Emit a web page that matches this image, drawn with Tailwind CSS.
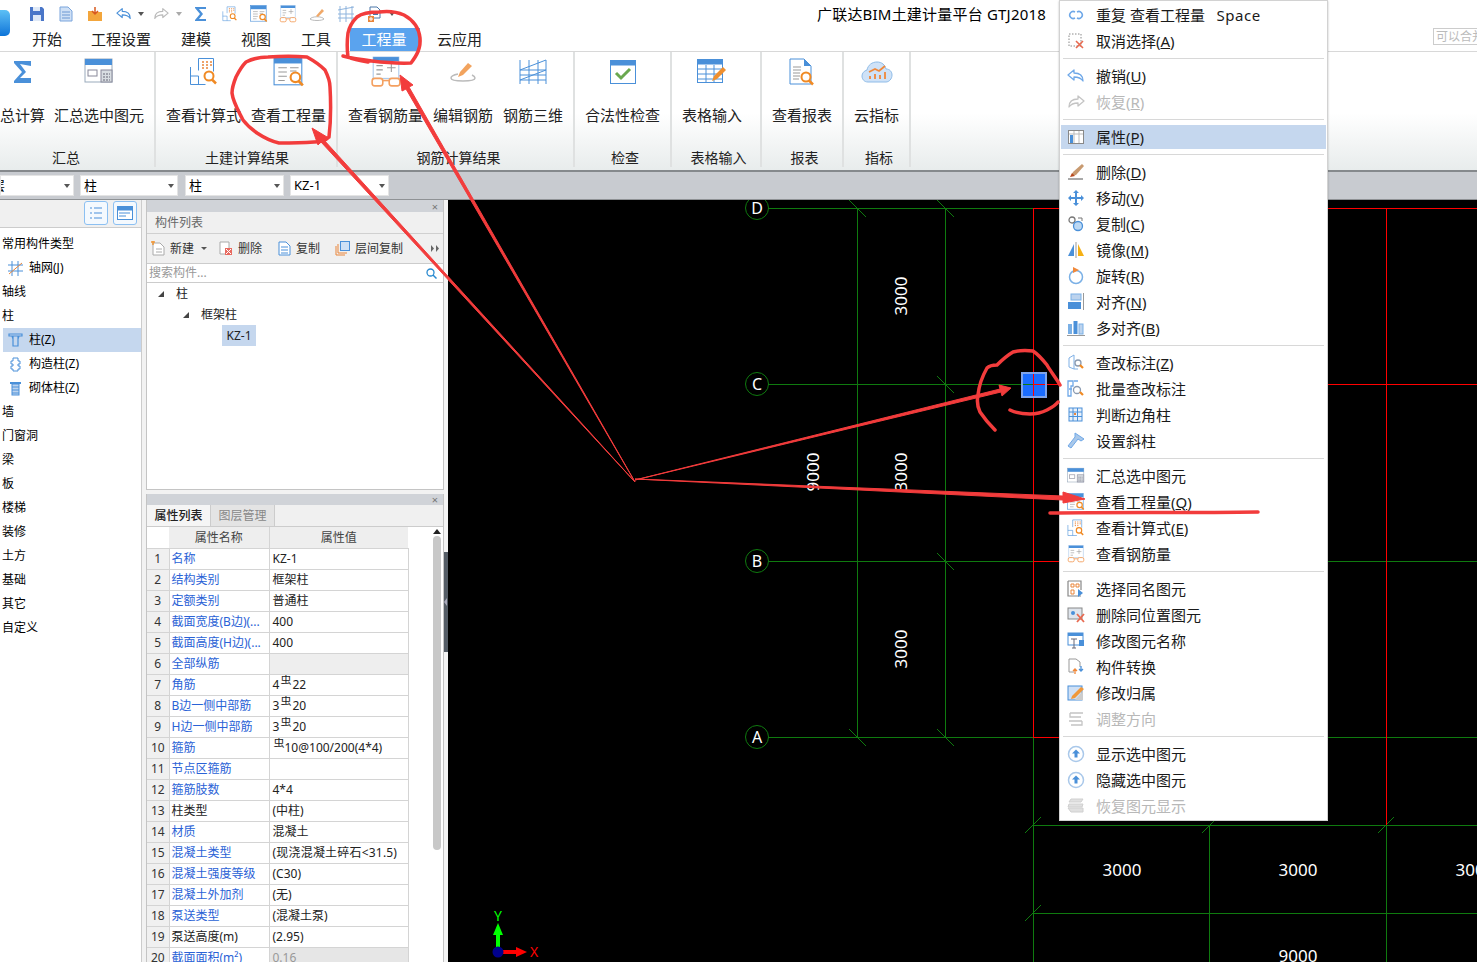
<!DOCTYPE html>
<html lang="zh">
<head>
<meta charset="utf-8">
<title>广联达BIM土建计量平台 GTJ2018</title>
<script src="https://cdn.jsdelivr.net/npm/@tailwindcss/browser@4"></script>
</head>
<body class="m-0">
<svg class="absolute w-0 h-0" aria-hidden="true">
  <defs>
    <symbol id="i-view" viewBox="0 0 30 30"><rect x="1" y="1" width="26" height="26" fill="#fff" stroke="#4a90d9"/><rect x="1" y="1" width="26" height="6" fill="#4a90d9"/><path d="M5 11h8M5 15h8M5 19h8M5 23h6M16 11h8M16 14h6" stroke="#999" fill="none"/><circle cx="21" cy="20" r="4.5" fill="#fff" stroke="#f08a24" stroke-width="2"/><path d="M24 23.5l4 4" stroke="#f08a24" stroke-width="2.5"/></symbol>
    <symbol id="i-calc" viewBox="0 0 30 30"><path d="M1.500 10v17.500h15M1.500 19h8v8.500M9.500 1.500h15v13M9.500 1.500v12" fill="none" stroke="#4a90d9"/><path d="M13 5h2M17 5h2M21 5h2M13 8h2M17 8h2M21 8h2M13 11h2M17 11h2" stroke="#e9853a" stroke-width="1.500"/><circle cx="20" cy="19" r="4.500" fill="#fff" stroke="#f08a24" stroke-width="2"/><path d="M23 22.500l4 4" stroke="#f08a24" stroke-width="2.500"/></symbol>
    <symbol id="i-steel" viewBox="0 0 30 30"><rect x="3" y="1" width="24" height="20" fill="#fff" stroke="#a9c8ea"/><rect x="3" y="1" width="24" height="4" fill="#4a90d9"/><path d="M6 9h6M6 13h6M6 17h4M16 11h8M20 7v8" stroke="#999" fill="none"/><rect x="2" y="21" width="10" height="7" rx="2.500" fill="#fff" stroke="#f4a060" stroke-width="1.500"/><rect x="18" y="21" width="10" height="7" rx="2.500" fill="#fff" stroke="#f4a060" stroke-width="1.500"/><path d="M12 23h6" stroke="#f4a060" stroke-width="1.500"/></symbol>
    <symbol id="i-sum" viewBox="0 0 30 30"><rect x="1" y="2" width="27" height="23" fill="#fff" stroke="#9ab"/><rect x="1" y="2" width="27" height="6" fill="#4a90d9"/><rect x="4" y="13" width="9" height="6" fill="#fff" stroke="#889"/><rect x="17" y="13" width="11" height="12" fill="#d8dde2" stroke="#889"/><path d="M19 17h7M19 20h7M19 23h7" stroke="#667" stroke-dasharray="2 1"/></symbol>
    <symbol id="i-up" viewBox="0 0 18 18"><circle cx="9" cy="9" r="7.500" fill="#fff" stroke="#a9c8ea" stroke-width="1.500"/><path d="M9 4.500l4 4h-2.500v4h-3v-4H5z" fill="#4a90d9"/></symbol>
    <symbol id="i-undo" viewBox="0 0 18 18"><path d="M1 8l6-5v3c5 0 9 2 9 8-2-3-5-4-9-4v3z" fill="#fff" stroke="currentColor" stroke-width="1.300" stroke-linejoin="round"/></symbol>
    <symbol id="i-redo" viewBox="0 0 18 18"><path d="M17 8l-6-5v3c-5 0-9 2-9 8 2-3 5-4 9-4v3z" fill="#fff" stroke="currentColor" stroke-width="1.300" stroke-linejoin="round"/></symbol>
    <symbol id="i-check" viewBox="0 0 18 18"><path d="M2 4l5-3v14l-5-2zM7 15h4" fill="none" stroke="#7fb0e6"/><circle cx="11" cy="9" r="3" fill="#fff" stroke="#8a9ab0" stroke-width="1.300"/><path d="M13 11l3 3" stroke="#f08a24" stroke-width="2.200"/></symbol>
  </defs>
</svg>

<div class="relative w-[1477px] h-[962px] overflow-hidden bg-white text-[12px] text-black font-['Noto_Sans','Noto_Sans_CJK_SC',sans-serif]">

  <!-- header -->
  <header class="flex h-[52px] border-b border-[#d8d8d8] bg-white">
    <div class="w-[10px] pt-[10px]"><div class="h-[26px] w-[10px] rounded-r-[5px] bg-linear-to-b from-[#5cc0f5] to-[#0a74d8]"></div></div>
    <div class="flex-1 flex flex-col">
      <div class="flex items-center h-[28px] pl-[19px]">
        <div class="flex items-center gap-[13px] w-[369px]">
          <svg class="w-4 h-4" viewBox="0 0 16 16"><path d="M1 1h12l2 2v12H1z" fill="#4a76c8"/><rect x="4" y="1" width="7" height="4" fill="#dfe9f7"/><rect x="4" y="9" width="8" height="6" fill="#dfe9f7"/></svg>
          <svg class="w-4 h-4" viewBox="0 0 16 16"><path d="M2 1h8l4 4v10H2z" fill="#cfe0f5" stroke="#7aa5dc"/><path d="M4 6h8M4 9h8M4 12h8" stroke="#6a97d2"/></svg>
          <svg class="w-4 h-4" viewBox="0 0 16 16"><path d="M1 5h5l1 1h8v9H1z" fill="#f3a63c"/><path d="M8 1v7M5 5l3 3 3-3" stroke="#d8591e" stroke-width="1.500" fill="none"/></svg>
          <svg class="w-4 h-4 text-[#4a90d9]"><use href="#i-undo"/></svg>
          <span class="-ml-[7px] -mr-[4px] w-0 h-0 border-x-[3px] border-x-transparent border-t-[4px] border-t-[#555]"></span>
          <svg class="w-4 h-4 text-[#bbb]"><use href="#i-redo"/></svg>
          <span class="-ml-[6px] -mr-[2px] w-0 h-0 border-x-[3px] border-x-transparent border-t-[4px] border-t-[#aaa]"></span>
          <svg class="w-4 h-4" viewBox="0 0 16 16"><path d="M13 3V1H2v1l5 6-5 6v1h11v-2H6l4-5-4-5z" fill="#4a90d9"/></svg>
          <svg class="w-4 h-4"><use href="#i-calc"/></svg>
          <svg class="w-[18px] h-[18px] -ml-[1px] -mr-[1px]"><use href="#i-view"/></svg>
          <svg class="w-[18px] h-[18px] -ml-[1px] -mr-[1px]"><use href="#i-steel"/></svg>
          <svg class="w-4 h-4" viewBox="0 0 16 16"><path d="M1 13c2-3 12-3 14 0-2 2-12 2-14 0z" fill="#fff" stroke="#bbb"/><path d="M7 10l6-7 2 2-6 6z" fill="#f0a868"/></svg>
          <svg class="w-4 h-4" viewBox="0 0 16 16"><path d="M2 0v16M8 0v16M14 0v16M0 4l16-3M0 8h16M0 12h16" stroke="#8fb4dd" fill="none"/></svg>
          <svg class="w-4 h-4" viewBox="0 0 16 16"><path d="M3 1h7l3 3v8H3z" fill="#fff" stroke="#4a76a8"/><rect x="6" y="5" width="5" height="4" fill="#4a76a8"/><rect x="1" y="10" width="6" height="6" fill="#e9853a"/><path d="M4 11v4M2 13h4" stroke="#fff"/></svg>
          <span class="-ml-[7px] w-0 h-0 border-x-[3px] border-x-transparent border-t-[4px] border-t-[#555]"></span>
        </div>
        <div class="ml-[419px] text-[15px] leading-[20px] tracking-[0.2px] whitespace-nowrap">广联达BIM土建计量平台 GTJ2018</div>
      </div>
      <nav class="flex h-[23px] text-[15px] text-[#222] leading-[23px] pl-[22px]">
        <span>开始</span><span class="ml-[29px]">工程设置</span><span class="ml-[30px]">建模</span><span class="ml-[30px]">视图</span><span class="ml-[30px]">工具</span>
        <span class="ml-[19px] w-[70px] pr-[2px] text-center bg-[#5aa3ee] text-white">工程量</span>
        <span class="ml-[17px]">云应用</span>
        <span class="ml-auto h-[17px] w-[44px] overflow-hidden whitespace-nowrap border border-[#ccc] border-r-0 pl-[2px] text-[12px] leading-[15px] text-[#bbb]">可以合并</span>
      </nav>
    </div>
  </header>

  <!-- ribbon -->
  <section class="flex h-[118px] text-[15px] text-[#222] bg-linear-to-b from-white from-[52%] to-[#e8ecec]">
    <div class="w-[156px] h-[115px] flex flex-col border-r-2 border-[#dfe1e1]">
      <div class="flex">
        <div class="flex flex-col items-center pr-[4px]"><div class="h-[40px] flex items-center"><svg class="w-[20px] h-[24px]" viewBox="0 0 20 24"><path d="M18 6V1H1v2l8 9-8 9v2h17v-5H7l6-6-6-8z" fill="#4a90d9"/></svg></div><span class="mt-[13px] leading-[20px] whitespace-nowrap">总计算</span></div>
        <div class="flex flex-col items-center px-[5px]"><div class="h-[40px] flex items-center"><svg class="w-[30px] h-[30px]"><use href="#i-sum"/></svg></div><span class="mt-[13px] leading-[20px] whitespace-nowrap">汇总选中图元</span></div>
      </div>
      <div class="mt-auto pr-[22px] text-center text-[14px] h-[23px] leading-[28px]">汇总</div>
    </div>
    <div class="w-[182px] h-[115px] flex flex-col border-r-2 border-[#dfe1e1] pl-[5px]">
      <div class="flex">
        <div class="flex flex-col items-center px-[5px]"><div class="h-[40px] flex items-center"><svg class="w-[30px] h-[30px]"><use href="#i-calc"/></svg></div><span class="mt-[13px] leading-[20px] whitespace-nowrap">查看计算式</span></div>
        <div class="flex flex-col items-center px-[5px]"><div class="h-[40px] flex items-center"><svg class="w-[32px] h-[32px]"><use href="#i-view"/></svg></div><span class="mt-[13px] leading-[20px] whitespace-nowrap">查看工程量</span></div>
      </div>
      <div class="mt-auto text-center text-[14px] h-[23px] leading-[28px] pr-[3px]">土建计算结果</div>
    </div>
    <div class="w-[237px] h-[115px] flex flex-col border-r-2 border-[#dfe1e1] pl-[5px]">
      <div class="flex">
        <div class="flex flex-col items-center px-[5px]"><div class="h-[40px] flex items-center"><svg class="w-[32px] h-[32px]"><use href="#i-steel"/></svg></div><span class="mt-[13px] leading-[20px] whitespace-nowrap">查看钢筋量</span></div>
        <div class="flex flex-col items-center px-[5px]"><div class="h-[40px] flex items-center"><svg class="w-[26px] h-[26px]" viewBox="0 0 26 26"><path d="M8 15C3 16 1 17 1 19c0 2 4 3 12 3s12-1 12-3c0-1-1-2-3-3" fill="none" stroke="#bbb" stroke-width="1.500"/><path d="M8 18l2-5 8-9 4 3-9 9z" fill="#f2a35e"/></svg></div><span class="mt-[13px] leading-[20px] whitespace-nowrap">编辑钢筋</span></div>
        <div class="flex flex-col items-center px-[5px]"><div class="h-[40px] flex items-center"><svg class="w-[28px] h-[28px]" viewBox="0 0 28 28"><path d="M1 2v24M10 2v24M19 2v24M27 2v24M1 12L27 2M1 22L27 12M1 12h26M1 17h26M1 22h26" fill="none" stroke="#4a90d9"/></svg></div><span class="mt-[13px] leading-[20px] whitespace-nowrap">钢筋三维</span></div>
      </div>
      <div class="mt-auto text-center text-[14px] h-[23px] leading-[28px] pl-[1px]">钢筋计算结果</div>
    </div>
    <div class="w-[97px] h-[115px] flex flex-col border-r-2 border-[#dfe1e1] pl-[5px]">
      <div class="self-start flex flex-col items-center px-[5px]"><div class="h-[40px] flex items-center"><svg class="w-[26px] h-[24px]" viewBox="0 0 26 24"><rect x=".5" y=".5" width="25" height="23" fill="#fff" stroke="#4a90d9"/><rect x=".5" y=".5" width="25" height="5" fill="#4a90d9"/><path d="M6 13l5 5 9-9" fill="none" stroke="#6aa84f" stroke-width="3"/></svg></div><span class="mt-[13px] leading-[20px] whitespace-nowrap">合法性检查</span></div>
      <div class="mt-auto text-center text-[14px] h-[23px] leading-[28px]">检查</div>
    </div>
    <div class="w-[90px] h-[115px] flex flex-col border-r-2 border-[#dfe1e1] pl-[5px]">
      <div class="self-start flex flex-col items-center px-[5px]"><div class="h-[40px] flex items-center"><svg class="w-[30px] h-[26px]" viewBox="0 0 30 26"><rect x=".5" y=".5" width="25" height="23" fill="#fff" stroke="#4a90d9"/><rect x=".5" y=".5" width="25" height="5" fill="#4a90d9"/><path d="M1 10h25M1 15h25M1 20h25M9 6v18M17 6v18" stroke="#4a90d9"/><path d="M15 22l2-5 9-9 3 3-9 9z" fill="#ef8f2e"/></svg></div><span class="mt-[13px] leading-[20px] whitespace-nowrap">表格输入</span></div>
      <div class="mt-auto text-center text-[14px] h-[23px] leading-[28px]">表格输入</div>
    </div>
    <div class="w-[82px] h-[115px] flex flex-col border-r-2 border-[#dfe1e1] pl-[5px]">
      <div class="self-start flex flex-col items-center px-[5px]"><div class="h-[40px] flex items-center"><svg class="w-[26px] h-[28px]" viewBox="0 0 26 28"><path d="M1 1h14l7 7v18H1z" fill="#fff" stroke="#4a90d9"/><path d="M15 1l7 7h-7z" fill="#4a90d9"/><path d="M4 9h8M4 12h8M4 15h7M4 18h7M4 21h6" stroke="#999"/><circle cx="17" cy="19" r="4.500" fill="#fff" stroke="#f08a24" stroke-width="2"/><path d="M20 22.500l4 4" stroke="#f08a24" stroke-width="2.500"/></svg></div><span class="mt-[13px] leading-[20px] whitespace-nowrap">查看报表</span></div>
      <div class="mt-auto text-center text-[14px] h-[23px] leading-[28px]">报表</div>
    </div>
    <div class="w-[67px] h-[115px] flex flex-col border-r-2 border-[#dfe1e1] pl-[5px]">
      <div class="self-start flex flex-col items-center px-[5px]"><div class="h-[40px] flex items-center"><svg class="w-[32px] h-[22px]" viewBox="0 0 32 22"><path d="M7 21C3 21 1 18 1 15s2-5 5-6c1-5 5-8 10-8s8 3 9 7c4 0 6 3 6 6 0 4-3 7-6 7z" fill="#cfe2f7" stroke="#8fbce8"/><path d="M9 18v-3M14 18v-5M19 18v-4M24 18v-7M8 11l6-3 4 2 6-5" stroke="#f0883a" stroke-width="1.800" fill="none"/></svg></div><span class="mt-[13px] leading-[20px] whitespace-nowrap">云指标</span></div>
      <div class="mt-auto text-center text-[14px] h-[23px] leading-[28px]">指标</div>
    </div>
  </section>

  <!-- combos -->
  <section class="flex h-[30px] items-center bg-[#c8cbd0] border-t-2 border-b border-t-[#85898c] border-b-[#8f9295] text-[13px]">
    <div class="w-[74px] h-[21px] bg-white border border-[#e4e4e4] flex items-center pr-[3px] overflow-hidden"><span class="-ml-[9px]">层</span><span class="ml-auto w-0 h-0 border-x-[3px] border-x-transparent border-t-[4px] border-t-[#555]"></span></div>
    <div class="ml-[6px] w-[98px] h-[21px] bg-white border border-[#e4e4e4] flex items-center px-[3px]"><span>柱</span><span class="ml-auto w-0 h-0 border-x-[3px] border-x-transparent border-t-[4px] border-t-[#555]"></span></div>
    <div class="ml-[7px] w-[99px] h-[21px] bg-white border border-[#e4e4e4] flex items-center px-[3px]"><span>柱</span><span class="ml-auto w-0 h-0 border-x-[3px] border-x-transparent border-t-[4px] border-t-[#555]"></span></div>
    <div class="ml-[6px] w-[99px] h-[21px] bg-white border border-[#e4e4e4] flex items-center px-[3px]"><span>KZ-1</span><span class="ml-auto w-0 h-0 border-x-[3px] border-x-transparent border-t-[4px] border-t-[#555]"></span></div>
  </section>

  <main class="flex h-[762px]">
    <!-- left tree -->
    <aside class="w-[142px] border-r border-[#ccc] bg-white">
      <div class="h-[28px] bg-[#f0f0f0] border-b border-[#ccc] flex justify-end gap-[5px] pr-[4px] pt-[1px]">
        <div class="w-[24px] h-[24px] rounded-[3px] border border-[#8cc0f2] bg-[#f4f9fe] flex items-center justify-center"><svg class="w-[14px] h-[14px]" viewBox="0 0 14 14"><path d="M1 2h2M1 7h2M1 12h2M5 2h8M5 7h8M5 12h8" stroke="#4a90d9" stroke-width="1.200"/></svg></div>
        <div class="w-[24px] h-[24px] rounded-[3px] border border-[#8cc0f2] bg-[#f4f9fe] flex items-center justify-center"><svg class="w-[16px] h-[14px]" viewBox="0 0 16 14"><rect x=".5" y=".5" width="15" height="13" fill="#fff" stroke="#4a90d9"/><rect x=".5" y=".5" width="15" height="4" fill="#4a90d9"/><path d="M2 7h11M2 10h7" stroke="#4a90d9"/></svg></div>
      </div>
      <ul class="pt-[4px] [&>li]:h-[24px] [&>li]:leading-[24px] [&>li]:whitespace-nowrap text-[12px]">
        <li class="pl-[2px]">常用构件类型</li>
        <li class="flex items-center pl-[8px] gap-[6px]"><svg class="w-[15px] h-[15px]" viewBox="0 0 15 15"><path d="M4 0v15M10 0v15M0 4h15M0 10h15" stroke="#4a90d9"/><path d="M1 13L14 2" stroke="#e9853a"/></svg><span>轴网(J)</span></li>
        <li class="pl-[2px]">轴线</li>
        <li class="pl-[2px]">柱</li>
        <li class="ml-[3px] flex items-center bg-[#c5d7ee] pl-[5px] gap-[6px]"><svg class="w-[15px] h-[15px]" viewBox="0 0 15 15"><path d="M1 1h13v2H1zM5 3v10h5V3M4 3l1 3M11 3l-1 3" fill="none" stroke="#4a90d9" stroke-width="1.200"/></svg><span>柱(Z)</span></li>
        <li class="flex items-center pl-[8px] gap-[6px]"><svg class="w-[15px] h-[15px]" viewBox="0 0 15 15"><path d="M5 1h5v3h2v3h-2v2h2v3h-2v2H5v-2H3V9h2V7H3V4h2z" fill="#fff" stroke="#4a90d9"/></svg><span>构造柱(Z)</span></li>
        <li class="flex items-center pl-[8px] gap-[6px]"><svg class="w-[15px] h-[15px]" viewBox="0 0 15 15"><path d="M2 1h11v2H2z" fill="#4a90d9"/><rect x="4" y="3" width="7" height="11" fill="#bcd3ee" stroke="#4a90d9"/><path d="M4 6h7M4 9h7M4 12h7" stroke="#4a90d9"/></svg><span>砌体柱(Z)</span></li>
        <li class="pl-[2px]">墙</li>
        <li class="pl-[2px]">门窗洞</li>
        <li class="pl-[2px]">梁</li>
        <li class="pl-[2px]">板</li>
        <li class="pl-[2px]">楼梯</li>
        <li class="pl-[2px]">装修</li>
        <li class="pl-[2px]">土方</li>
        <li class="pl-[2px]">基础</li>
        <li class="pl-[2px]">其它</li>
        <li class="pl-[2px]">自定义</li>
      </ul>
    </aside>

    <!-- panels -->
    <div class="w-[302px] pl-[4px] bg-[#f2f2f2] flex flex-col gap-[4px]">
      <!-- component list -->
      <section class="h-[290px] border border-[#c4c4c4] border-t-0 flex flex-col bg-white">
        <div class="h-[12px] bg-[#d0d3d8] flex items-center justify-end pr-[5px] text-[#777] text-[11px] leading-none">×</div>
        <div class="h-[22px] bg-[#f0f0f0] border-b border-[#d0d0d0] pl-[8px] leading-[21px] text-[#666]">构件列表</div>
        <div class="h-[30px] bg-[#f0f0f0] border-b border-[#ccc] flex items-center pl-[4px] text-[#333] whitespace-nowrap">
          <svg class="w-[14px] h-[15px]" viewBox="0 0 14 15"><path d="M2 2h7l4 4v8H2z" fill="#fff" stroke="#aaa"/><path d="M5 8h6M5 11h6" stroke="#aaa"/><path d="M0 1h4M2 0v4" stroke="#f0983a" stroke-width="1.500"/></svg>
          <span class="ml-[5px]">新建</span><span class="ml-[7px] w-0 h-0 border-x-[3px] border-x-transparent border-t-[3px] border-t-[#555]"></span>
          <svg class="ml-[12px] w-[14px] h-[15px]" viewBox="0 0 14 15"><path d="M1 1h9v12H1z" fill="#fff" stroke="#aaa"/><rect x="6" y="7" width="7" height="7" fill="#e86a60"/><path d="M7 8l5 5M12 8l-5 5" stroke="#fff"/></svg>
          <span class="ml-[5px]">删除</span>
          <svg class="ml-[16px] w-[13px] h-[15px]" viewBox="0 0 13 15"><path d="M1 1h7l4 4v9H1z" fill="#fff" stroke="#4a90d9"/><path d="M3 6h7M3 9h7M3 12h7" stroke="#4a90d9"/></svg>
          <span class="ml-[5px]">复制</span>
          <svg class="ml-[15px] w-[15px] h-[15px]" viewBox="0 0 15 15"><path d="M1 5v9h9" fill="none" stroke="#e9853a"/><path d="M3 3v9h9" fill="none" stroke="#e9853a"/><rect x="5.500" y=".5" width="9" height="9" fill="#cfe0f5" stroke="#4a90d9"/></svg>
          <span class="ml-[5px]">层间复制</span>
          <svg class="ml-auto mr-[4px] w-[8px] h-[7px]" viewBox="0 0 8 7"><path d="M0 0l3 3.500-3 3.500zM5 0l3 3.500-3 3.500z" fill="#666"/></svg>
        </div>
        <div class="h-[19px] border-b border-[#ccc] flex items-center pl-[2px] pr-[6px] text-[#999]"><span>搜索构件...</span><svg class="ml-auto w-[11px] h-[11px]" viewBox="0 0 11 11"><circle cx="4.500" cy="4.500" r="3.500" fill="none" stroke="#2a8ad0" stroke-width="1.300"/><path d="M7 7l3.500 3.500" stroke="#2a8ad0" stroke-width="1.500"/></svg></div>
        <div class="flex-1 text-[#222]">
          <div class="h-[20px] mt-[1px] flex items-center pl-[11px]"><span class="w-0 h-0 border-l-[6px] border-l-transparent border-b-[6px] border-b-[#444]"></span><span class="ml-[12px]">柱</span></div>
          <div class="h-[21px] flex items-center pl-[36px]"><span class="w-0 h-0 border-l-[6px] border-l-transparent border-b-[6px] border-b-[#444]"></span><span class="ml-[12px]">框架柱</span></div>
          <div class="h-[21px] flex items-center pl-[75px]"><span class="h-[21px] w-[34px] bg-[#c5d7ee] text-center leading-[21px]">KZ-1</span></div>
        </div>
      </section>

      <!-- properties -->
      <section class="flex-1 min-h-0 border border-[#c4c4c4] border-y-0 flex flex-col bg-white overflow-hidden">
        <div class="h-[12px] bg-[#d0d3d8] flex items-center justify-end pr-[5px] text-[#777] text-[11px] leading-none">×</div>
        <div class="h-[22px] bg-[#f0f0f0] border-b border-[#ccc] flex leading-[21px]">
          <span class="w-[64px] text-center font-medium bg-[#f5f5f5] border-r border-[#ccc] text-[#222]">属性列表</span>
          <span class="w-[64px] text-center bg-[#e4e4e4] border-r border-[#ccc] text-[#888]">图层管理</span>
        </div>
        <div class="flex">
          <table class="w-[261px] table-fixed border-collapse text-[12px] text-[#222] [&_td]:border-y [&_td]:border-r [&_td]:border-[#d4d4d4] [&_td]:h-[21px] [&_td]:p-0 [&_td]:leading-[20px] [&_td]:whitespace-nowrap [&_td]:overflow-hidden [&_td:first-child]:bg-[#f0f0f0] [&_td:first-child]:text-center [&_td:first-child]:text-[#333] [&_td:nth-child(2)]:pl-[2px] [&_td:nth-child(2)]:text-[#2a62d6] [&_td:nth-child(3)]:pl-[3px] [&_th]:h-[20px] [&_th]:p-0 [&_th]:pt-[1px] [&_th]:font-normal [&_th]:text-[#444] [&_th]:leading-[20px]">
            <colgroup><col class="w-[22px]"><col class="w-[100px]"><col class="w-[139px]"></colgroup>
            <thead><tr><th></th><th class="bg-[#eeeeee] border-r border-[#d4d4d4]">属性名称</th><th class="bg-[#eeeeee]">属性值</th></tr></thead>
            <tbody>
              <tr><td>1</td><td>名称</td><td>KZ-1</td></tr>
              <tr><td>2</td><td>结构类别</td><td>框架柱</td></tr>
              <tr><td>3</td><td>定额类别</td><td>普通柱</td></tr>
              <tr><td>4</td><td>截面宽度(B边)(...</td><td>400</td></tr>
              <tr><td>5</td><td>截面高度(H边)(...</td><td>400</td></tr>
              <tr><td>6</td><td>全部纵筋</td><td class="bg-[#eeeeee]"></td></tr>
              <tr><td>7</td><td>角筋</td><td>4<sup class="text-[11px] mx-[1px]">虫</sup>22</td></tr>
              <tr><td>8</td><td>B边一侧中部筋</td><td>3<sup class="text-[11px] mx-[1px]">虫</sup>20</td></tr>
              <tr><td>9</td><td>H边一侧中部筋</td><td>3<sup class="text-[11px] mx-[1px]">虫</sup>20</td></tr>
              <tr><td>10</td><td>箍筋</td><td><sup class="text-[11px] ml-[1px]">虫</sup>10@100/200(4*4)</td></tr>
              <tr><td>11</td><td>节点区箍筋</td><td></td></tr>
              <tr><td>12</td><td>箍筋肢数</td><td>4*4</td></tr>
              <tr><td>13</td><td class="!text-[#222]">柱类型</td><td>(中柱)</td></tr>
              <tr><td>14</td><td>材质</td><td>混凝土</td></tr>
              <tr><td>15</td><td>混凝土类型</td><td class="tracking-[0.2px]">(现浇混凝土碎石&lt;31.5)</td></tr>
              <tr><td>16</td><td>混凝土强度等级</td><td>(C30)</td></tr>
              <tr><td>17</td><td>混凝土外加剂</td><td>(无)</td></tr>
              <tr><td>18</td><td>泵送类型</td><td>(混凝土泵)</td></tr>
              <tr><td>19</td><td class="!text-[#222]">泵送高度(m)</td><td>(2.95)</td></tr>
              <tr><td>20</td><td>截面面积(m²)</td><td class="bg-[#e6e6e6] !text-[#999]">0.16</td></tr>
            </tbody>
          </table>
          <div class="ml-[24px] w-[8px] flex flex-col items-center pt-[2px]">
            <span class="w-0 h-0 border-x-[4px] border-x-transparent border-b-[5px] border-b-[#222]"></span>
            <div class="mt-[2px] w-[8px] h-[314px] rounded-[4px] bg-[#c8c8c8]"></div>
          </div>
        </div>
      </section>
    </div>

    <!-- splitter -->
    <div class="w-[4px] bg-[#f4f4f4] pt-[352px]"><div class="h-[100px] bg-[#555d66] flex items-center"><span class="w-0 h-0 border-y-[4px] border-y-transparent border-r-[3px] border-r-[#aab]"></span></div></div>

    <!-- canvas -->
    <div class="relative flex-1 bg-black overflow-hidden">
      <svg class="block" width="1029" height="762" viewBox="448 200 1029 762" font-family="Noto Sans, sans-serif">
        <g stroke="#0f7a0f" stroke-width="1" fill="none" shape-rendering="crispEdges">
          <path d="M768 208.500H1033M768 384.500H1033M768 561.500H1033M768 737.500H1033M857.500 208V737M945.500 208V737"/>
          <path d="M1033.500 737V962M1209.500 825V962M1386.500 825V962M1033 825.500H1477M1033 913.500H1477M1328 561.500H1477M1328 737.500H1477"/>
        </g>
        <g stroke="#0f7a0f" stroke-width="1" fill="none">
          <path d="M849 200l17 17M937 200l17 17M937 376l17 17M937 553l17 17M849 729l17 17M937 729l17 17"/>
          <path d="M1025 833l16-16M1202 833l16-16M1378 833l16-16M1025 921l16-16"/>
          <circle cx="757" cy="208" r="11.500"/><circle cx="757" cy="384" r="11.500"/><circle cx="757" cy="561" r="11.500"/><circle cx="757" cy="737" r="11.500"/>
        </g>
        <g stroke="#f00" stroke-width="1" fill="none" shape-rendering="crispEdges">
          <path d="M1033 208.500H1477M1033 384.500H1477M1033.500 208V737M1386.500 208V825M1033 561.500H1062M1033 737.500H1062"/>
        </g>
        <rect x="1022" y="373" width="24" height="24" fill="#1a6cff" stroke="#7ea3ea" stroke-width="2"/>
        <path d="M1023 384.500H1033" stroke="#0f7a0f" fill="none" shape-rendering="crispEdges"/>
        <path d="M1033 384.500H1045M1033.500 374V396" stroke="#f00" fill="none" shape-rendering="crispEdges"/>
        <g fill="#fff" font-size="16" text-anchor="middle">
          <text x="757" y="214">D</text><text x="757" y="390">C</text><text x="757" y="567">B</text><text x="757" y="743">A</text>
        </g>
        <g fill="#fff" font-size="17" text-anchor="middle">
          <text transform="translate(907 296) rotate(-90)">3000</text>
          <text transform="translate(907 472) rotate(-90)">3000</text>
          <text transform="translate(819 472) rotate(-90)">9000</text>
          <text transform="translate(907 649) rotate(-90)">3000</text>
          <text x="1122" y="876">3000</text><text x="1298" y="876">3000</text><text x="1475" y="876">3000</text><text x="1298" y="962">9000</text>
        </g>
        <path d="M498 950V934" stroke="#0f0" stroke-width="4"/><path d="M493 935l5-12 5 12z" fill="#0f0"/>
        <path d="M500 952H518" stroke="#f00" stroke-width="4"/><path d="M516 947l11 5-11 5z" fill="#f00"/>
        <circle cx="498" cy="952" r="5.500" fill="#00008c"/>
        <text x="498" y="921" fill="#0f0" font-size="14" text-anchor="middle">Y</text>
        <text x="534" y="957" fill="#f00" font-size="14" text-anchor="middle">X</text>
      </svg>
    </div>
  </main>

  <!-- context menu -->
  <div class="absolute z-10 left-[1059px] top-0 w-[269px] h-[821px] bg-white border border-[#d2d2d2] shadow-[0_1px_2px_rgba(0,0,0,.25)] pt-[1px] text-[15px] text-[#1a1a1a] whitespace-nowrap [&>hr]:mx-[3px] [&>hr]:my-[4px] [&>hr]:border-0 [&>hr]:h-px [&>hr]:bg-[#d8d8d8] [&>div]:flex [&>div]:items-center [&>div]:h-[26px] [&>div]:pl-[7px] [&>div>svg]:w-[18px] [&>div>svg]:h-[18px] [&>div>svg]:mr-[11px] [&>div>svg]:shrink-0">
    <div><svg viewBox="0 0 18 18"><path d="M8 6a3.500 3.500 0 1 0 0 6M10 6a3.500 3.500 0 1 1 0 6" stroke="#6fa8e8" stroke-width="1.500" fill="none"/></svg><span>重复 查看工程量&nbsp;&nbsp;&nbsp;<span class="tracking-[0.5px]">Space</span></span></div>
    <div><svg viewBox="0 0 18 18"><rect x="2" y="2" width="12" height="12" fill="none" stroke="#888" stroke-dasharray="1.500 1.500"/><path d="M9 9l7 7M16 9l-7 7" stroke="#e86a50" stroke-width="1.600"/></svg><span>取消选择(<u>A</u>)</span></div>
    <hr>
    <div><svg class="text-[#6fa8e8]"><use href="#i-undo"/></svg><span>撤销(<u>U</u>)</span></div>
    <div class="text-[#b8b8b8]"><svg class="text-[#c4c4c4]"><use href="#i-redo"/></svg><span>恢复(<u>R</u>)</span></div>
    <hr>
    <div class="mx-[1px] bg-[#c5d7ee] !pl-[6px] !h-[24px] my-[5px]"><svg viewBox="0 0 18 18"><rect x="1.500" y="2.500" width="15" height="13" fill="#fff" stroke="#888"/><rect x="3" y="7" width="3" height="8" fill="#4a90d9"/><path d="M7 3v12M12 3v12M2 6h14" stroke="#bbb"/></svg><span>属性(<u>P</u>)</span></div>
    <hr>
    <div><svg viewBox="0 0 18 18"><path d="M4 13l2-4 9-8 2 2-8 9z" fill="#c89a70"/><path d="M3 14l2-4 3 3z" fill="#b84a20"/><path d="M1 16h15" stroke="#555"/></svg><span>删除(<u>D</u>)</span></div>
    <div><svg viewBox="0 0 18 18"><path d="M9 1l3 3h-2v4h4V6l3 3-3 3v-2h-4v4h2l-3 3-3-3h2v-4H4v2L1 9l3-3v2h4V4H6z" fill="#4a90d9"/></svg><span>移动(<u>V</u>)</span></div>
    <div><svg viewBox="0 0 18 18"><circle cx="5" cy="5" r="3" fill="#fff" stroke="#777" stroke-width="1.300"/><circle cx="11" cy="11" r="4.500" fill="#bcd8f3" stroke="#4a90d9" stroke-width="1.300"/><path d="M11 3h4v3" fill="none" stroke="#777"/></svg><span>复制(<u>C</u>)</span></div>
    <div><svg viewBox="0 0 18 18"><path d="M7 3v12H1z" fill="#4a90d9"/><path d="M11 3v12h6z" fill="#f5b014"/><path d="M9 1v16" stroke="#999"/></svg><span>镜像(<u>M</u>)</span></div>
    <div><svg viewBox="0 0 18 18"><circle cx="9" cy="10" r="6.500" fill="none" stroke="#7ab0e6" stroke-width="1.500"/><path d="M6 0l6 3-6 3z" fill="#f0883a"/></svg><span>旋转(<u>R</u>)</span></div>
    <div><svg viewBox="0 0 18 18"><rect x="4" y="1" width="10" height="6" fill="#bcd3ee" stroke="#7ab0e6"/><rect x="1" y="9" width="13" height="7" fill="#4a90d9"/><path d="M16.500 0v17" stroke="#999"/></svg><span>对齐(<u>N</u>)</span></div>
    <div><svg viewBox="0 0 18 18"><rect x="1" y="5" width="4" height="10" fill="#7ab0e6"/><rect x="6.500" y="2" width="4" height="13" fill="#4a90d9"/><rect x="12" y="5" width="4" height="10" fill="#bcd3ee" stroke="#7ab0e6"/><path d="M0 16.500h18" stroke="#999"/></svg><span>多对齐(<u>B</u>)</span></div>
    <hr>
    <div><svg><use href="#i-check"/></svg><span>查改标注(<u>Z</u>)</span></div>
    <div><svg viewBox="0 0 18 18"><path d="M1 1h5v5H4v10H1zM7 1h4M2 9h3" fill="none" stroke="#6fa8e8" stroke-width="1.300"/><circle cx="10" cy="10" r="3.500" fill="#fff" stroke="#8a9ab0" stroke-width="1.300"/><path d="M13 12l3 3" stroke="#f08a24" stroke-width="2.200"/></svg><span>批量查改标注</span></div>
    <div><svg viewBox="0 0 18 18"><rect x="2" y="2" width="13" height="13" fill="#e8f0fa" stroke="#4a90d9"/><path d="M6 2v13M10.500 2v13M2 6h13M2 10.500h13" stroke="#4a90d9"/><path d="M7 8h2" stroke="#e9853a" stroke-width="2"/></svg><span>判断边角柱</span></div>
    <div><svg viewBox="0 0 18 18"><path d="M8 1l9 6-3 2-3-2-7 9-3-2 7-9z" fill="#a9c8ea" stroke="#6fa8e8"/></svg><span>设置斜柱</span></div>
    <hr>
    <div><svg viewBox="0 0 30 30"><use href="#i-sum"/></svg><span>汇总选中图元</span></div>
    <div><svg viewBox="0 0 30 30"><use href="#i-view"/></svg><span>查看工程量(<u>Q</u>)</span></div>
    <div><svg viewBox="0 0 30 30"><use href="#i-calc"/></svg><span>查看计算式(<u>E</u>)</span></div>
    <div><svg viewBox="0 0 30 30"><use href="#i-steel"/></svg><span>查看钢筋量</span></div>
    <hr>
    <div><svg viewBox="0 0 18 18"><path d="M1 1h13v9M14 16H1V1" fill="none" stroke="#888" stroke-width="1.200"/><path d="M4 4h3v3H4zM9 4h3v3H9zM4 10h3v4H4z" fill="none" stroke="#e9853a"/><path d="M11 9l5 4-5 4z" fill="#4a90d9"/></svg><span>选择同名图元</span></div>
    <div><svg viewBox="0 0 18 18"><rect x="1" y="2" width="14" height="11" fill="#dfe5ec" stroke="#888"/><circle cx="6" cy="7" r="2" fill="#4a90d9"/><path d="M10 8l7 8M17 8l-7 8" stroke="#e86a50" stroke-width="1.800"/></svg><span>删除同位置图元</span></div>
    <div><svg viewBox="0 0 18 18"><rect x="1" y="1" width="15" height="12" fill="#fff" stroke="#4a90d9"/><rect x="1" y="1" width="15" height="3" fill="#4a90d9"/><rect x="12" y="8" width="5" height="6" fill="#4a90d9"/><path d="M4 7h6M7 7v9M5 16h4" stroke="#667" fill="none"/></svg><span>修改图元名称</span></div>
    <div><svg viewBox="0 0 18 18"><path d="M2 1h7l4 3v5M7 14H2V1" fill="#fff" stroke="#999"/><path d="M8 16v-5M6 13l2-2 2 2" stroke="#f0883a" fill="none" stroke-width="1.300"/><path d="M14 8v5M12 11l2 2 2-2" stroke="#4a90d9" fill="none" stroke-width="1.300"/></svg><span>构件转换</span></div>
    <div><svg viewBox="0 0 18 18"><rect x="1" y="2" width="14" height="14" fill="#cfe0f5" stroke="#4a90d9"/><path d="M8 16h8V7z" fill="#ccc"/><path d="M5 12l9-9 3 2-9 9-4 1z" fill="#f0983a"/></svg><span>修改归属</span></div>
    <div class="text-[#b8b8b8]"><svg viewBox="0 0 18 18"><path d="M3 3h13M3 3v4h11M15 11H2M15 11v4H4" fill="none" stroke="#c4c4c4" stroke-width="1.300"/></svg><span>调整方向</span></div>
    <hr>
    <div><svg><use href="#i-up"/></svg><span>显示选中图元</span></div>
    <div><svg><use href="#i-up"/></svg><span>隐藏选中图元</span></div>
    <div class="text-[#b8b8b8]"><svg viewBox="0 0 18 18"><path d="M4 2h12l-2 3H2zM2 7h14l-1 3H1zM1 11h15v4H4z" fill="#e0e0e0" stroke="#d0d0d0"/></svg><span>恢复图元显示</span></div>
  </div>

  <!-- hand-drawn annotations -->
  <svg class="absolute z-20 left-0 top-0 pointer-events-none" width="1477" height="962" viewBox="0 0 1477 962">
    <g fill="none" stroke="#f23c3c" stroke-width="3.500" stroke-linecap="round" stroke-linejoin="round">
      <path d="M343 56C355 59 385 64 411 63 417 55 421 48 420 38 419 28 413 20 404 15 395 11 386 11 379 12 370 12 361 14 357 17 352 22 349 28 348 33 347 41 347 50 348 57 354 60 361 61 368 62"/>
      <path d="M329 137C325 141 320 142 314 142 300 143 290 143 279 143 270 141 263 137 257 133 250 128 246 124 243 120 238 110 233 102 232 93 232 87 234 82 236 77 239 71 242 66 246 62 254 58 261 57 268 57 282 56 295 56 307 57 316 62 321 66 325 70 328 76 330 82 330 87 331 104 331 120 329 137"/>
      <path d="M995 430C989 424 984 418 980 412 977 406 977 400 978 395 979 385 983 375 987 368 990 365 993 365 997 365 1002 360 1008 355 1013 352 1020 350 1026 350 1033 351 1039 355 1043 360 1047 365 1051 372 1056 378 1060 385"/>
      <path d="M1058 402C1055 406 1051 408 1047 410 1041 413 1036 414 1030 414 1023 414 1016 413 1010 410"/>
      <path d="M1050 513C1110 512 1190 513 1258 512"/>
    </g>
    <g fill="#f23c3c" stroke="#f23c3c" stroke-width="1" stroke-linejoin="round">
      <polygon points="635,480 1000,389 999,385 1011,388 1002,396 1001,392"/>
      <polygon points="635,479 1063,496 1063,492 1085,499 1063,503 1063,500"/>
      <polygon points="635,482 409,87 413,85 400,75 402,91 406,89"/>
      <polygon points="635,482 324,140 327,137 312,128 318,145 321,142"/>
    </g>
  </svg>
</div>
</body>
</html>
